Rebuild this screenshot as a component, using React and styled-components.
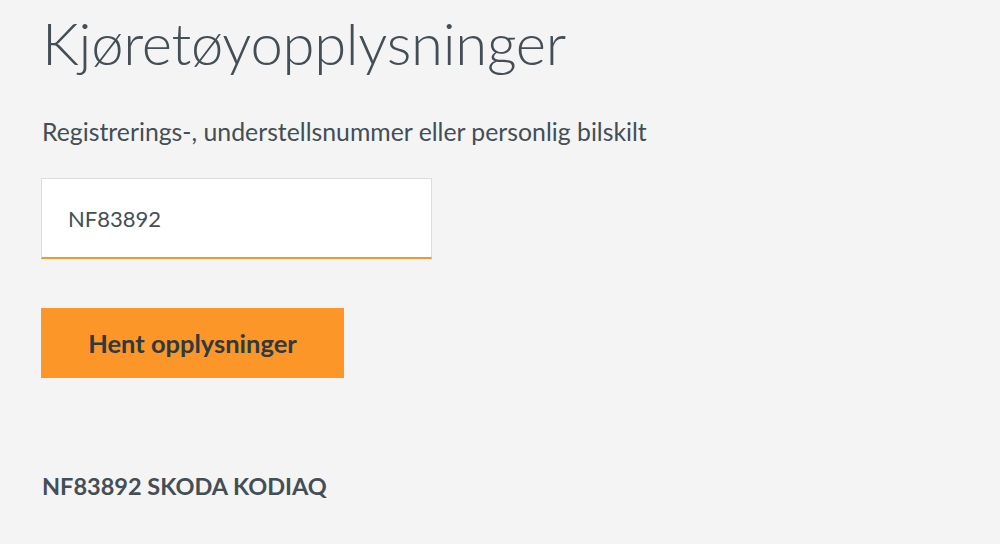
import React from "react";
import styled, { createGlobalStyle } from "styled-components";

const Global = createGlobalStyle`
  html, body { margin: 0; padding: 0; background: #f4f4f4; }
  body { font-family: Lato, "Noto Sans", sans-serif; color: #434e55; }
`;

const Page = styled.main`
  display: flex;
  flex-direction: column;
  align-items: flex-start;
  padding: 0 0 0 41px;
  min-height: 544px;
  box-sizing: border-box;
`;

const Title = styled.h1`
  margin: 8px 0 0 1px;
  font-family: Lato, sans-serif;
  font-weight: 300;
  font-size: 58px;
  line-height: 70px;
  color: #434e55;
  letter-spacing: -0.3px;
`;

const Label = styled.label`
  margin: 39px 0 0 1px;
  font-size: 24.8px;
  line-height: 30px;
  color: #434e55;
`;

const Input = styled.input`
  margin-top: 31px;
  width: 391px;
  height: 81px;
  box-sizing: border-box;
  border: 1px solid #dcdcdc;
  border-bottom: 2px solid #f7962b;
  background: #fff;
  padding: 0 0 0 26px;
  font-family: Lato, sans-serif;
  font-size: 22px;
  color: #434e55;
  outline: none;
`;

const Button = styled.button`
  margin-top: 49px;
  width: 303px;
  height: 70px;
  border: none;
  background: #fd9628;
  font-family: Lato, sans-serif;
  font-weight: 700;
  font-size: 25.5px;
  color: #2f3a40;
  cursor: pointer;
`;

const Result = styled.h2`
  margin: 94px 0 0 1px;
  font-size: 23.5px;
  line-height: 28px;
  font-weight: 700;
  color: #434e55;
`;

export default function App() {
  return (
    <>
      <Global />
      <Page>
        <Title>Kjøretøyopplysninger</Title>
        <Label htmlFor="reg">Registrerings-, understellsnummer eller personlig bilskilt</Label>
        <Input id="reg" defaultValue="NF83892" />
        <Button>Hent opplysninger</Button>
        <Result>NF83892 SKODA KODIAQ</Result>
      </Page>
    </>
  );
}
